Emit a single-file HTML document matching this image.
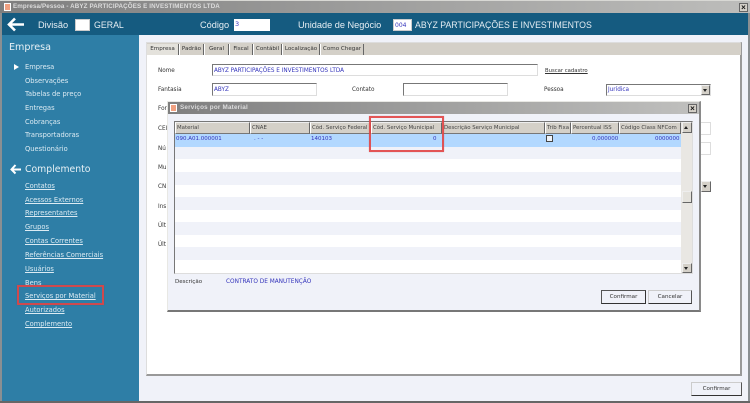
<!DOCTYPE html>
<html><head><meta charset="utf-8"><style>
html,body{margin:0;padding:0;background:#f0f2f9}
#p{position:relative;width:750px;height:403px;overflow:hidden;background:#f0f2f9;font-family:"DejaVu Sans",sans-serif;font-size:5.7px;color:#333;filter:blur(.35px)}
#p div{position:absolute;box-sizing:border-box}
.t{white-space:nowrap;line-height:10px;height:10px}
.s{color:#dcebf3;font-size:6.7px;left:25px}
.u{text-decoration:underline}
.b{color:#3333bb}
.i{background:#fff;border:1px solid #aaa;border-top-color:#777;border-left-color:#777;border-right-color:#ddd;border-bottom-color:#ddd}
.h{color:#e6eef3;font-size:9.2px;font-family:"Liberation Sans",sans-serif;line-height:12px;height:12px;white-space:nowrap}
.tab{top:44px;height:11px;border-right:1px solid #666;border-left:1px solid #fff;line-height:10px;text-align:center;font-size:5.6px;white-space:nowrap}
.th{top:122px;height:12px;background:#d4d0c8;border-right:1px solid #666;border-bottom:1px solid #777;border-top:1px solid #eee;border-left:1px solid #fff;line-height:10px;font-size:5.4px;padding-left:1px;white-space:nowrap;overflow:hidden;color:#444}
.btn{background:#f0f2f9;border:1px solid #ccc;border-right-color:#555;border-bottom-color:#333;text-align:center;font-size:5.6px;line-height:12px}
.sb{background:#d4d0c8;border:1px solid #eee;border-right-color:#666;border-bottom-color:#666}
.c{font-size:5.5px;top:134px}
.r{border:2px solid #e24444;box-shadow:0 0 1px rgba(120,60,60,.4);opacity:.9}
</style></head><body><div id="p">
<!-- title -->
<div style="left:0;top:0;width:750px;height:13px;background:linear-gradient(90deg,#7f7f7f,#bdbdbb);border-top:1px solid #d8d8d4"></div>
<div style="left:4px;top:3px;width:7px;height:8px;background:#f0a080;border:1px solid #fff"></div>
<div class="t" style="left:13px;top:2px;color:#ddd;font-size:6.2px;font-weight:bold;font-family:'Liberation Sans',sans-serif;letter-spacing:.14px">Empresa/Pessoa - ABYZ PARTICIPAÇÕES E INVESTIMENTOS LTDA</div>
<div style="left:739px;top:3px;width:9px;height:9px;background:#d4d0c8;border:1px solid #666;font:bold 8px/7px 'Liberation Sans',sans-serif;text-align:center;color:#111">×</div>
<!-- left border -->
<div style="left:0;top:13px;width:2px;height:390px;background:#8a8f92"></div>
<div style="left:748px;top:13px;width:2px;height:390px;background:#8a8f92"></div>
<div style="left:0;top:401px;width:750px;height:2px;background:#666"></div>
<!-- header -->
<div style="left:2px;top:13px;width:746px;height:22px;background:#155b80"></div>
<svg style="position:absolute;left:7px;top:17px" width="18" height="15" viewBox="0 0 18 15"><path d="M8 1.5 2 7.5l6 6M2.5 7.5H17" fill="none" stroke="#fff" stroke-width="2.6"/></svg>
<div class="h" style="left:38px;top:19px">Divisão</div>
<div style="left:75px;top:19px;width:15px;height:12px;background:#fff;border:1px solid #ccc"></div>
<div class="h" style="left:94px;top:19px;font-size:8.8px">GERAL</div>
<div class="h" style="left:200px;top:19px">Código</div>
<div style="left:234px;top:19px;width:36px;height:12px;background:#fff;font-size:6.5px;line-height:11px;color:#33b;padding-left:1px">3</div>
<div class="h" style="left:298px;top:19px">Unidade de Negócio</div>
<div style="left:393px;top:19px;width:19px;height:12px;background:#fff;font-size:6px;line-height:11px;color:#33b;padding-left:1px;border:1px solid #ccc">004</div>
<div class="h" style="left:415px;top:19px;font-size:8.75px">ABYZ PARTICIPAÇÕES E INVESTIMENTOS</div>
<!-- sidebar -->
<div style="left:2px;top:35px;width:137px;height:366px;background:#2e7ea6"></div>
<div class="t" style="left:9px;top:42px;color:#e6f0f5;line-height:11px;height:11px;font-size:9.6px">Empresa</div>
<div style="left:14px;top:64px;border-left:5px solid #fff;border-top:3px solid transparent;border-bottom:3px solid transparent"></div>
<div class="t s" style="top:62px">Empresa</div>
<div class="t s" style="top:76px">Observações</div>
<div class="t s" style="top:89px">Tabelas de preço</div>
<div class="t s" style="top:103px">Entregas</div>
<div class="t s" style="top:117px">Cobranças</div>
<div class="t s" style="top:130px">Transportadoras</div>
<div class="t s" style="top:144px">Questionário</div>
<svg style="position:absolute;left:10px;top:164px" width="12" height="11" viewBox="0 0 12 11"><path d="M5.5 1 1.5 5.5l4 4M2 5.5h9" fill="none" stroke="#fff" stroke-width="2"/></svg>
<div class="t" style="left:25px;top:164px;color:#e6f0f5;font-size:9.3px;line-height:11px;height:11px">Complemento</div>
<div class="t s u" style="top:181px">Contatos</div>
<div class="t s u" style="top:195px">Acessos Externos</div>
<div class="t s u" style="top:208px">Representantes</div>
<div class="t s u" style="top:222px">Grupos</div>
<div class="t s u" style="top:236px">Contas Correntes</div>
<div class="t s u" style="top:250px">Referências Comerciais</div>
<div class="t s u" style="top:264px">Usuários</div>
<div class="t s" style="top:278px">Bens</div>
<div class="t s u" style="top:291px">Serviços por Material</div>
<div class="t s u" style="top:305px">Autorizados</div>
<div class="t s u" style="top:319px">Complemento</div>
<div class="r" style="left:17px;top:285px;width:87px;height:20px"></div>
<!-- panel -->
<div style="left:146px;top:42px;width:596px;height:334px;background:#fff;border:1px solid #ddd;border-right:2px solid #999;border-bottom:2px solid #999"></div>
<div style="left:147px;top:43px;width:594px;height:12px;background:#d4d0c8"></div>
<div class="tab" style="left:147px;width:32px;background:#e4e2dc;border-left:0">Empresa</div>
<div class="tab" style="left:179px;width:25px">Padrão</div>
<div class="tab" style="left:204px;width:25px">Geral</div>
<div class="tab" style="left:229px;width:24px">Fiscal</div>
<div class="tab" style="left:253px;width:29px">Contábil</div>
<div class="tab" style="left:282px;width:38px">Localização</div>
<div class="tab" style="left:320px;width:44px">Como Chegar</div>
<div class="t" style="left:158px;top:66px">Nome</div>
<div class="i t b" style="left:212px;top:64px;width:326px;height:12px;font-size:5.7px;padding-left:1px;line-height:13px">ABYZ PARTICIPAÇÕES E INVESTIMENTOS LTDA</div>
<div class="t u" style="left:545px;top:66px;font-size:5.3px">Buscar cadastro</div>
<div class="t" style="left:158px;top:85px">Fantasia</div>
<div class="i t b" style="left:212px;top:83px;width:105px;height:13px;padding-left:1px;line-height:13px">ABYZ</div>
<div class="t" style="left:352px;top:85px">Contato</div>
<div class="i" style="left:403px;top:83px;width:105px;height:13px"></div>
<div class="t" style="left:544px;top:85px">Pessoa</div>
<div class="i t b" style="left:606px;top:84px;width:105px;height:12px;padding-left:1px">Jurídica</div>
<div class="sb" style="left:701px;top:85px;width:9px;height:10px"></div>
<div style="left:703px;top:89px;border-top:3px solid #222;border-left:2.5px solid transparent;border-right:2.5px solid transparent"></div>
<div class="t" style="left:158px;top:104px">For</div>
<div class="t" style="left:158px;top:124px">CEI</div>
<div class="t" style="left:158px;top:144px">Nú</div>
<div class="t" style="left:158px;top:163px">Mu</div>
<div class="t" style="left:158px;top:182px">CN</div>
<div class="t" style="left:158px;top:202px">Ins</div>
<div class="t" style="left:158px;top:221px">Últ</div>
<div class="t" style="left:158px;top:240px">Últ</div>
<div class="i" style="left:700px;top:122px;width:11px;height:13px;border-color:#ddd"></div>
<div class="i" style="left:700px;top:142px;width:11px;height:13px;border-color:#ddd"></div>
<div class="sb" style="left:701px;top:181px;width:10px;height:11px"></div>
<div style="left:703px;top:185px;border-top:3px solid #222;border-left:2.5px solid transparent;border-right:2.5px solid transparent"></div>
<!-- dialog -->
<div style="left:167px;top:101px;width:534px;height:211px;background:#f0f2f9;border:1px solid #e8e8e4;border-right:2px solid #8a8a8a;border-bottom:2px solid #777"></div>
<div style="left:168px;top:102px;width:531px;height:12px;background:linear-gradient(90deg,#7f7f7f,#c0c0be)"></div>
<div style="left:170px;top:104px;width:7px;height:8px;background:#f0a080;border:1px solid #fff"></div>
<div class="t" style="left:180px;top:103px;color:#ddd;font-size:6.3px;font-weight:bold;font-family:'Liberation Sans',sans-serif;letter-spacing:.2px">Serviços por Material</div>
<div style="left:688px;top:104px;width:9px;height:9px;background:#d4d0c8;border:1px solid #666;font:bold 8px/7px 'Liberation Sans',sans-serif;text-align:center;color:#111">×</div>
<!-- grid -->
<div style="left:174px;top:121px;width:519px;height:153px;background:#fff;border:1px solid #ddd;border-left:1px solid #777;border-top:1px solid #777"></div>
<div style="left:175px;top:134px;width:506px;height:12.5px;background:#b2d8ff"></div>
<div style="left:175px;top:146.5px;width:506px;height:12.5px;background:#f0f2f9"></div>
<div style="left:175px;top:172px;width:506px;height:12.5px;background:#f0f2f9"></div>
<div style="left:175px;top:197px;width:506px;height:12.5px;background:#f0f2f9"></div>
<div style="left:175px;top:222px;width:506px;height:12.5px;background:#f0f2f9"></div>
<div style="left:175px;top:247px;width:506px;height:12.5px;background:#f0f2f9"></div>
<div class="th" style="left:175px;width:75px">Material</div>
<div class="th" style="left:250px;width:60px">CNAE</div>
<div class="th" style="left:310px;width:61px">Cód. Serviço Federal</div>
<div class="th" style="left:371px;width:71px">Cód. Serviço Municipal</div>
<div class="th" style="left:442px;width:103px">Descrição Serviço Municipal</div>
<div class="th" style="left:545px;width:26px">Trib Fixa</div>
<div class="th" style="left:571px;width:48px">Percentual ISS</div>
<div class="th" style="left:619px;width:62px">Código Class NFCom</div>
<div class="t b c" style="left:176px">090.A01.000001</div>
<div class="t b c" style="left:254px">. - -</div>
<div class="t b c" style="left:311px">140103</div>
<div class="t b c" style="left:433px">0</div>
<div style="left:546px;top:135px;width:7px;height:7px;border:1px solid #444;background:#eef2f8"></div>
<div class="t b c" style="left:592px">0,000000</div>
<div class="t b c" style="left:655px">0000000</div>
<div style="left:681px;top:122px;width:11px;height:151px;background:#e9e7e3"></div>
<div class="sb" style="left:682px;top:122px;width:10px;height:11px"></div>
<div style="left:684px;top:126px;border-bottom:3px solid #222;border-left:2.5px solid transparent;border-right:2.5px solid transparent"></div>
<div class="sb" style="left:682px;top:191px;width:10px;height:12px;background:#e4e2dc"></div>
<div class="sb" style="left:682px;top:263px;width:10px;height:10px"></div>
<div style="left:684px;top:267px;border-top:3px solid #222;border-left:2.5px solid transparent;border-right:2.5px solid transparent"></div>
<div class="r" style="left:369px;top:116px;width:75px;height:36px"></div>
<div class="t" style="left:175px;top:277px;font-size:5.5px">Descrição</div>
<div class="t b" style="left:226px;top:277px;font-size:5.8px">CONTRATO DE MANUTENÇÃO</div>
<div class="btn" style="left:601px;top:290px;width:45px;height:14px;border:1px solid #333;border-top-color:#555;border-left-color:#555">Confirmar</div>
<div class="btn" style="left:648px;top:290px;width:44px;height:14px">Cancelar</div>
<div class="btn" style="left:691px;top:382px;width:51px;height:14px">Confirmar</div>
</div></body></html>
